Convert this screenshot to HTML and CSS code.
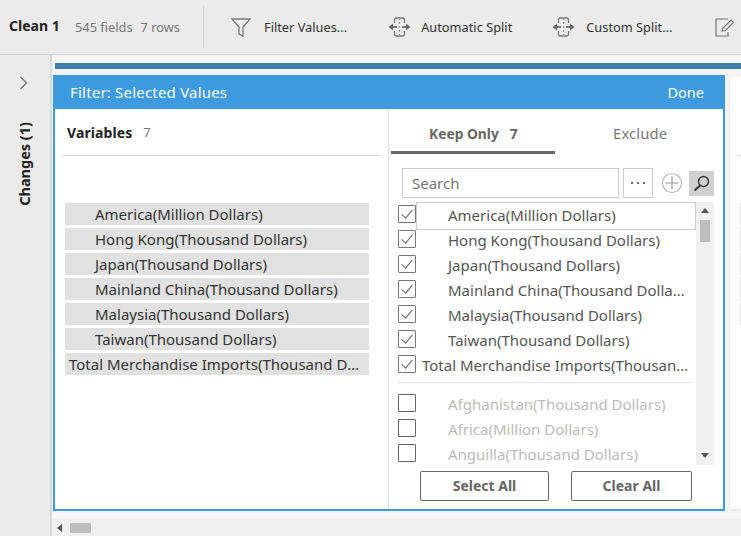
FILE: index.html
```html
<!DOCTYPE html>
<html lang="en">
<head>
    <meta charset="UTF-8">
    <title>Clean 1 - Filter</title>
    <link rel="stylesheet" href="styles.css">
</head>
<body>

<header class="toolbar">
    <div class="step-name">Clean 1</div>
    <div class="step-meta"><span>545 fields</span><span>7 rows</span></div>
    <div class="tool tool-filter">
        <svg width="20" height="19" viewBox="0 0 20 19" fill="none" stroke="#777" stroke-width="1.3"><path d="M1 1h18l-7 8v9l-4-2V9z"/></svg>
        <span>Filter Values...</span>
    </div>
    <div class="tool tool-auto">
        <svg width="23" height="20" viewBox="0 0 23 20" fill="none" stroke="#777" stroke-width="1.3"><path d="M6.500 6V2.500q0-1.500 1.500-1.500h7q1.500 0 1.500 1.500V6M6.500 14v3.500q0 1.500 1.500 1.500h7q1.500 0 1.500-1.500V14"/><path d="M11.500 1v18" stroke-dasharray="2 2" stroke="#999"/><path d="M3 10h6M14 10h6" stroke-width="2"/><path d="M5 6.500 .5 10 5 13.500zM18 6.500l4.500 3.500-4.500 3.500z" fill="#666" stroke="none"/></svg>
        <span>Automatic Split</span>
    </div>
    <div class="tool tool-custom">
        <svg width="23" height="20" viewBox="0 0 23 20" fill="none" stroke="#777" stroke-width="1.3"><path d="M6.500 6V2.500q0-1.500 1.500-1.500h7q1.500 0 1.500 1.500V6M6.500 14v3.500q0 1.500 1.500 1.500h7q1.500 0 1.500-1.500V14"/><path d="M11.500 1v18" stroke-dasharray="2 2" stroke="#999"/><path d="M3 10h6M14 10h6" stroke-width="2"/><path d="M5 6.500 .5 10 5 13.500zM18 6.500l4.500 3.500-4.500 3.500z" fill="#666" stroke="none"/></svg>
        <span>Custom Split...</span>
    </div>
    <div class="tool tool-edit">
        <svg width="20" height="19" viewBox="0 0 20 19" fill="none" stroke="#777" stroke-width="1.2"><path d="M13 1H1v17h12v-4"/><path d="M7 13l1-3 8-8 2.500 2.500-8 8z"/></svg>
    </div>
</header>

<div class="workspace">
    <aside class="sidebar">
        <svg class="chevron" width="9" height="14" viewBox="0 0 9 14" fill="none" stroke="#777" stroke-width="1.4"><path d="M1.500 1l6 6-6 6"/></svg>
        <div class="changes">Changes (1)</div>
    </aside>

    <main class="main">
        <div class="canvas">
            <div class="strip"></div>
            <div class="cards">
                <section class="panel">
                    <div class="panel-head">
                        <span>Filter: Selected Values</span>
                        <span class="done">Done</span>
                    </div>
                    <div class="panel-body">
                        <div class="vars">
                            <div class="vars-head"><strong>Variables</strong><span>7</span></div>
                            <div class="vars-list">
                                <div class="var">America(Million Dollars)</div>
                                <div class="var">Hong Kong(Thousand Dollars)</div>
                                <div class="var">Japan(Thousand Dollars)</div>
                                <div class="var">Mainland China(Thousand Dollars)</div>
                                <div class="var">Malaysia(Thousand Dollars)</div>
                                <div class="var">Taiwan(Thousand Dollars)</div>
                                <div class="var var-total">Total Merchandise Imports(Thousand Dollars)</div>
                            </div>
                        </div>
                        <div class="values">
                            <div class="tabs">
                                <div class="tab tab-active">Keep Only<span>7</span></div>
                                <div class="tab">Exclude</div>
                            </div>
                            <div class="search-row">
                                <div class="search-box">Search</div>
                                <div class="more-btn"><i></i><i></i><i></i></div>
                                <svg class="plus" width="22" height="22" viewBox="0 0 22 22" fill="none" stroke="#bbb" stroke-width="1.2"><circle cx="11" cy="11" r="9.500"/><path d="M11 4.500v13M4.500 11h13" stroke="#999"/></svg>
                                <div class="search-btn">
                                    <svg width="17" height="17" viewBox="0 0 17 17" fill="none" stroke="#333" stroke-width="1.4"><circle cx="10.500" cy="6.500" r="5"/><path d="M7 10.500 1.500 15.500" stroke-width="2"/></svg>
                                </div>
                            </div>
                            <div class="list-wrap">
                                <div class="list">
                                    <div class="item"><span class="box checked"></span><span class="label label-hl">America(Million Dollars)</span></div>
                                    <div class="item"><span class="box checked"></span><span class="label">Hong Kong(Thousand Dollars)</span></div>
                                    <div class="item"><span class="box checked"></span><span class="label">Japan(Thousand Dollars)</span></div>
                                    <div class="item"><span class="box checked"></span><span class="label">Mainland China(Thousand Dollars)</span></div>
                                    <div class="item"><span class="box checked"></span><span class="label">Malaysia(Thousand Dollars)</span></div>
                                    <div class="item"><span class="box checked"></span><span class="label">Taiwan(Thousand Dollars)</span></div>
                                    <div class="item"><span class="box checked"></span><span class="label label-total">Total Merchandise Imports(Thousand Dollars)</span></div>
                                    <div class="list-sep"></div>
                                    <div class="item item-off"><span class="box"></span><span class="label">Afghanistan(Thousand Dollars)</span></div>
                                    <div class="item item-off"><span class="box"></span><span class="label">Africa(Million Dollars)</span></div>
                                    <div class="item item-off"><span class="box"></span><span class="label">Anguilla(Thousand Dollars)</span></div>
                                </div>
                                <div class="vscroll">
                                    <div class="arrow-up"></div>
                                    <div class="vthumb"></div>
                                    <div class="arrow-down"></div>
                                </div>
                            </div>
                            <div class="actions">
                                <button class="btn btn-select">Select All</button>
                                <button class="btn btn-clear">Clear All</button>
                            </div>
                        </div>
                    </div>
                </section>
                <div class="next-card">
                    <div class="next-line"></div>
                    <div class="next-row"></div>
                    <div class="next-row"></div>
                    <div class="next-row"></div>
                    <div class="next-row"></div>
                    <div class="next-row"></div>
                </div>
            </div>
        </div>
        <div class="hscroll">
            <div class="arrow-left"></div>
            <div class="hthumb"></div>
        </div>
    </main>
</div>

</body>
</html>
```

FILE: styles.css
```css
html, body {
    height: 100%;
}

body {
    font-family: 'Noto Sans', sans-serif;
    font-size: 15px;
    color: #333;
    background-color: #f5f5f5;
    margin: 0;
    display: flex;
    flex-direction: column;
    overflow: hidden;
}

/* top toolbar */
.toolbar {
    height: 55px;
    box-sizing: border-box;
    flex-shrink: 0;
    display: flex;
    align-items: center;
    background-color: #ebebeb;
    border-bottom: 1px solid #d4d4d4;
    padding-left: 9px;
}

.step-name {
    font-size: 14px;
    font-weight: 700;
    color: #222;
    width: 66px;
    margin-top: -3px;
}

.step-meta {
    display: flex;
    gap: 8px;
    width: 128px;
    font-size: 12.8px;
    color: #777;
    height: 42px;
    line-height: 42px;
    border-right: 1px solid #d4d4d4;
}

.tool {
    display: flex;
    align-items: center;
    font-size: 12.8px;
    color: #333;
    flex-shrink: 0;
}

.tool-filter {
    margin-left: 27px;
    gap: 13px;
}

.tool-auto {
    margin-left: 41px;
    gap: 10px;
}

.tool-custom {
    margin-left: 40px;
    gap: 11px;
}

.tool-edit {
    margin-left: 43px;
}

/* left rail */
.workspace {
    flex: 1;
    display: flex;
    min-height: 0;
}

.sidebar {
    width: 52px;
    box-sizing: border-box;
    flex-shrink: 0;
    background-color: #ebebeb;
    border-right: 2px solid #d9d9d9;
    display: flex;
    flex-direction: column;
    align-items: center;
}

.chevron {
    margin-top: 21px;
    margin-right: 3px;
}

.changes {
    margin-top: 32px;
    margin-right: 2px;
    writing-mode: vertical-rl;
    transform: rotate(180deg);
    font-size: 14.5px;
    font-weight: 700;
    color: #222;
}

.main {
    flex: 1;
    min-width: 0;
    display: flex;
    flex-direction: column;
}

.canvas {
    flex: 1;
    min-height: 0;
    padding-top: 8px;
    overflow: hidden;
}

.strip {
    height: 6px;
    margin-left: 3px;
    background-color: #3f7fa9;
}

.cards {
    display: flex;
    margin-top: 6px;
    margin-left: 1px;
}

/* filter panel */
.panel {
    width: 672px;
    height: 436px;
    box-sizing: border-box;
    flex-shrink: 0;
    border: 2px solid #3d9ae0;
    border-top: none;
    background-color: #fff;
    display: flex;
    flex-direction: column;
}

.panel-head {
    height: 34px;
    flex-shrink: 0;
    display: flex;
    justify-content: space-between;
    align-items: center;
    background-color: #3d9ae0;
    color: #fff;
    font-size: 15px;
    letter-spacing: 0.2px;
    padding: 0 21px 0 17px;
    margin: 0 -2px;
}

.done {
    font-size: 14.5px;
    letter-spacing: 0;
}

.panel-body {
    flex: 1;
    display: flex;
    min-height: 0;
}

.vars {
    width: 334px;
    box-sizing: border-box;
    flex-shrink: 0;
    border-right: 1px solid #e0e0e0;
    padding: 0 7px 0 8px;
}

.vars-head {
    height: 46px;
    display: flex;
    align-items: center;
    gap: 11px;
    padding-left: 4px;
    border-bottom: 1px solid #d9d9d9;
    font-size: 14px;
}

.vars-head strong {
    color: #222;
    letter-spacing: 0.1px;
}

.vars-head span {
    color: #777;
    font-size: 13px;
}

.vars-list {
    display: flex;
    flex-direction: column;
    gap: 3px;
    margin-top: 47px;
    margin-left: 2px;
    width: 304px;
}

.var {
    height: 22px;
    line-height: 23px;
    background-color: #e1e1e1;
    padding: 0 8px 0 30px;
    white-space: nowrap;
    overflow: hidden;
    text-overflow: ellipsis;
}

.var-total {
    padding-left: 4px;
}

.values {
    flex: 1;
    min-width: 0;
}

.tabs {
    display: flex;
    height: 46px;
    padding-left: 2px;
}

.tab {
    font-size: 14.8px;
    letter-spacing: 0.15px;
    color: #777;
    padding-top: 14px;
    box-sizing: border-box;
    padding-left: 58px;
}

.tab-active {
    width: 164px;
    padding-left: 38px;
    font-size: 13.8px;
    padding-top: 15px;
    letter-spacing: 0;
    font-weight: 700;
    color: #666;
    height: 45px;
    border-bottom: 3px solid #666;
}

.tab-active span {
    margin-left: 11px;
}

.search-row {
    display: flex;
    align-items: center;
    margin-top: 13px;
    margin-left: 13px;
}

.search-box {
    width: 217px;
    height: 30px;
    line-height: 29px;
    box-sizing: border-box;
    border: 1px solid #ccc;
    color: #777;
    padding-left: 9px;
}

.more-btn {
    width: 30px;
    height: 30px;
    box-sizing: border-box;
    margin-left: 4px;
    border: 1px solid #ccc;
    display: flex;
    align-items: center;
    justify-content: center;
    gap: 4px;
}

.more-btn i {
    width: 2px;
    height: 2px;
    background-color: #666;
}

.plus {
    margin-left: 8px;
}

.search-btn {
    width: 25px;
    height: 25px;
    margin-left: 6px;
    background-color: #d0d0d0;
    display: flex;
    align-items: center;
    justify-content: center;
}

/* value list */
.list-wrap {
    display: flex;
    margin-top: 4px;
    margin-left: 9px;
    height: 263px;
}

.list {
    width: 298px;
    overflow: hidden;
}

.item {
    display: flex;
    align-items: center;
    height: 25px;
    color: #555;
}

.item-off {
    color: #bbb;
}

.box {
    position: relative;
    width: 18px;
    height: 18px;
    margin-top: -1px;
    box-sizing: border-box;
    flex-shrink: 0;
    border: 1px solid #777;
    border-radius: 1px;
}

.checked::after {
    content: "";
    position: absolute;
    left: 5px;
    top: 1px;
    width: 5px;
    height: 10px;
    border: solid #666;
    border-width: 0 1.5px 1.5px 0;
    transform: rotate(40deg);
}

.item-off .box {
    border-color: #666;
}

.label {
    flex: 1;
    min-width: 0;
    padding-left: 32px;
    padding-right: 6px;
    white-space: nowrap;
    overflow: hidden;
    text-overflow: ellipsis;
    box-sizing: border-box;
}

.label-hl {
    height: 28px;
    margin-top: 2px;
    line-height: 24px;
    flex: none;
    width: 280px;
    border: 1px solid #ccc;
    padding-left: 31px;
}

.label-total {
    padding-left: 6px;
}

.list-sep {
    height: 1px;
    background-color: #e3e3e3;
    margin: 5px 3px 8px 0;
}

.vscroll {
    width: 18px;
    background-color: #f0f0f0;
    display: flex;
    flex-direction: column;
    align-items: center;
    flex-shrink: 0;
}

.arrow-up {
    margin-top: 6px;
    border: 4px solid transparent;
    border-top: none;
    border-bottom: 5px solid #555;
}

.vthumb {
    width: 10px;
    height: 22px;
    margin-top: 7px;
    background-color: #bdbdbd;
}

.arrow-down {
    margin-top: auto;
    margin-bottom: 7px;
    border: 4px solid transparent;
    border-bottom: none;
    border-top: 5px solid #555;
}

.actions {
    display: flex;
    margin-top: 6px;
    margin-left: 31px;
}

.btn {
    height: 30px;
    padding: 0 0 1px;
    background-color: #fff;
    border: 1px solid #666;
    border-radius: 2px;
    font-family: inherit;
    font-size: 14px;
    font-weight: 700;
    color: #666;
}

.btn-select {
    width: 129px;
}

.btn-clear {
    width: 121px;
    margin-left: 22px;
}

/* next card peeking in at the right */
.next-card {
    flex: 1;
    height: 432px;
    margin-top: 2px;
    margin-left: 5px;
    background-color: #fff;
    box-shadow: 0 1px 2px rgba(0, 0, 0, 0.1);
    overflow: hidden;
}

.next-line {
    height: 1px;
    margin-top: 78px;
    margin-left: 8px;
    background-color: #d9d9d9;
}

.next-row {
    height: 22px;
    margin-left: 10px;
    margin-bottom: 3px;
    background-color: #e1e1e1;
}

.next-line + .next-row {
    margin-top: 47px;
}

/* bottom scrollbar */
.hscroll {
    height: 17px;
    flex-shrink: 0;
    display: flex;
    align-items: center;
    background-color: #f0f0f0;
    padding-left: 5px;
}

.arrow-left {
    border: 4px solid transparent;
    border-left: none;
    border-right: 5px solid #555;
}

.hthumb {
    width: 21px;
    height: 10px;
    margin-left: 8px;
    background-color: #bdbdbd;
}
```
